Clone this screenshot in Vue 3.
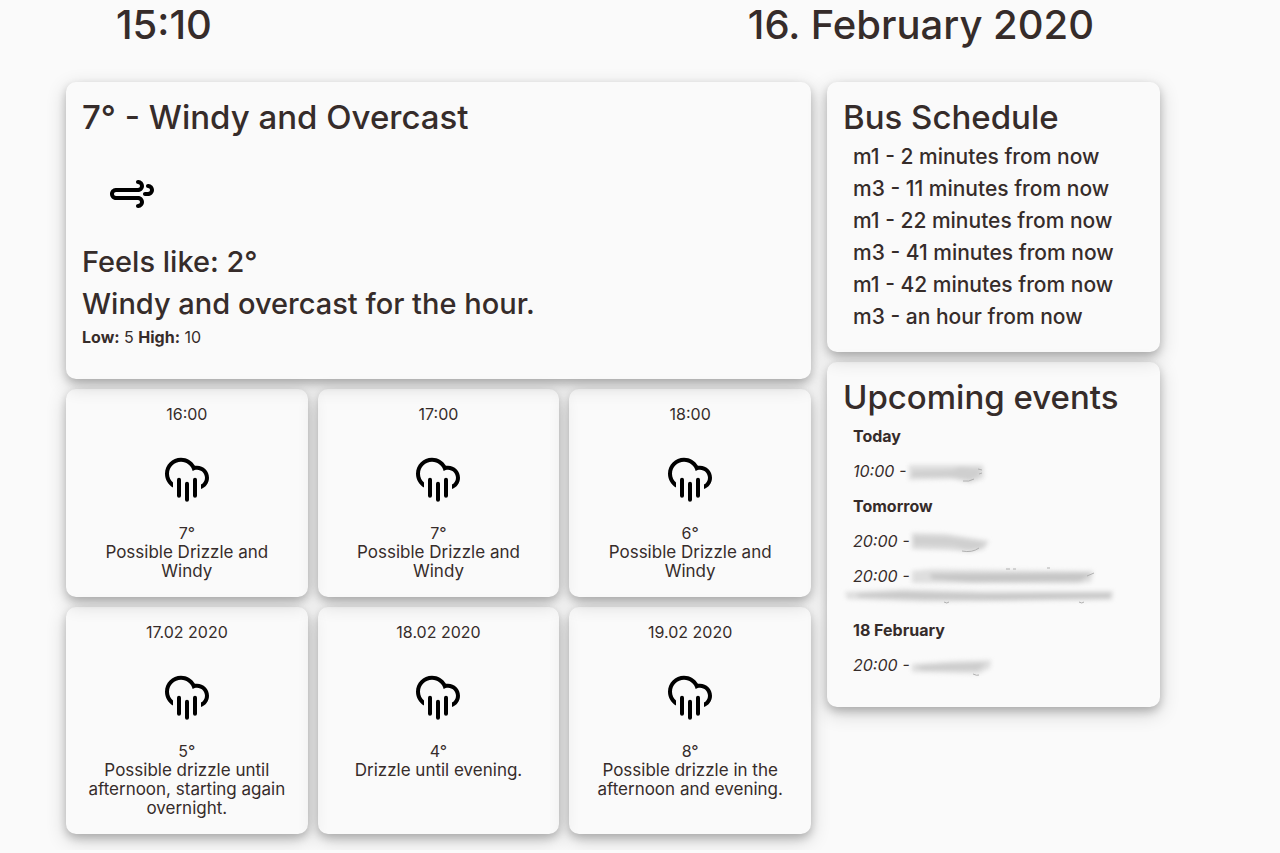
<script setup>
const hourly = [
  { when: '16:00', temp: '7°', text: 'Possible Drizzle and Windy' },
  { when: '17:00', temp: '7°', text: 'Possible Drizzle and Windy' },
  { when: '18:00', temp: '6°', text: 'Possible Drizzle and Windy' },
]
const daily = [
  { when: '17.02 2020', temp: '5°', text: 'Possible drizzle until afternoon, starting again overnight.' },
  { when: '18.02 2020', temp: '4°', text: 'Drizzle until evening.' },
  { when: '19.02 2020', temp: '8°', text: 'Possible drizzle in the afternoon and evening.' },
]
const forecasts = [...hourly, ...daily]
const buses = [
  'm1 - 2 minutes from now',
  'm3 - 11 minutes from now',
  'm1 - 22 minutes from now',
  'm3 - 41 minutes from now',
  'm1 - 42 minutes from now',
  'm3 - an hour from now',
]
</script>

<template>
  <div class="page">
    <header class="top">
      <h1>15:10</h1>
      <h1>16. February 2020</h1>
    </header>

    <main class="board">
      <div class="weather">
        <section class="card current">
          <h2>7° - Windy and Overcast</h2>
          <svg class="icon" viewBox="0 0 100 100" aria-hidden="true">
            <path d="M65.999,52h-3c-1.104,0-2-0.895-2-1.999c0-1.104,0.896-2,2-2h3c1.104,0,2-0.896,2-1.999c0-1.105-0.896-2-2-2s-2-0.896-2-2s0.896-2,2-2c0.138,0,0.271,0.014,0.401,0.041c3.121,0.211,5.597,2.783,5.597,5.959C71.997,49.314,69.312,52,65.999,52z" />
            <path d="M55.999,48.001H34.002c-1.104,0-1.999,0.896-1.999,2c0,1.104,0.895,1.999,1.999,1.999h21.997c3.313,0,6,2.688,6,6c0,3.176-2.476,5.748-5.597,5.959C56.271,63.986,56.139,64,55.999,64c-1.104,0-2-0.896-2-2c0-1.105,0.896-2,2-2s2-0.896,2-2s-0.896-2-2-2H34.002c-3.313,0-6-2.686-6-5.999c0-3.175,2.475-5.747,5.596-5.959c0.131-0.026,0.266-0.04,0.403-0.04h21.998c1.104,0,2-0.896,2-2s-0.896-2-2-2s-2-0.895-2-2c0-1.104,0.896-2,2-2c0.14,0,0.272,0.015,0.403,0.041c3.121,0.211,5.597,2.783,5.597,5.959C61.999,45.314,59.312,48.001,55.999,48.001z" />
          </svg>
          <h3>Feels like: 2°</h3>
          <h3>Windy and overcast for the hour.</h3>
          <p><strong>Low:</strong> 5 <strong>High:</strong> 10</p>
        </section>

        <section v-for="item in forecasts" :key="item.when" class="card forecast">
          <div>{{ item.when }}</div>
          <svg class="icon" viewBox="0 0 100 100" aria-hidden="true">
            <path d="M63.999,64.943v-4.381c2.389-1.385,4-3.963,4-6.92c0-4.418-3.58-8-7.998-8c-1.603,0-3.084,0.481-4.334,1.291c-1.232-5.316-5.973-9.29-11.664-9.29c-6.628,0-11.999,5.372-11.999,12c0,3.549,1.55,6.729,3.998,8.926v4.914c-4.776-2.769-7.998-7.922-7.998-13.84c0-8.836,7.162-15.999,15.999-15.999c6.004,0,11.229,3.312,13.965,8.203c0.664-0.113,1.336-0.205,2.033-0.205c6.627,0,11.998,5.373,11.998,12C71.999,58.863,68.655,63.293,63.999,64.943z" />
            <path class="rain" d="M42,55.64V71.64M50,59.64V75.64M58,55.64V71.64" />
          </svg>
          <div>{{ item.temp }}</div>
          <div class="summary">{{ item.text }}</div>
        </section>
      </div>

      <div class="side">
        <section class="card">
          <h2>Bus Schedule</h2>
          <ul class="buses">
            <li v-for="bus in buses" :key="bus">{{ bus }}</li>
          </ul>
        </section>

        <section class="card events">
          <h2>Upcoming events</h2>
          <h4>Today</h4>
          <p>
            <em>10:00 -</em>
            <svg class="smudge" width="80" height="19" viewBox="0 0 80 19" aria-hidden="true">
              <g class="soft">
                <path fill="#dedede" d="M1 3L52 3L75 3L76 16L62 21L45 17L1 18Z" />
                <path fill="#cfcfcf" d="M4 9L44 8L52 5L74 7L70 15L62 18L40 15L4 15Z" />
              </g>
              <path class="trace" d="M55 19Q61 20 66 17M70 7l4 1M71 12l3-1" />
            </svg>
          </p>
          <h4>Tomorrow</h4>
          <p>
            <em>20:00 -</em>
            <svg class="smudge" width="80" height="19" viewBox="0 0 80 19" aria-hidden="true">
              <g class="soft">
                <path fill="#d9d9d9" d="M0 1L35 2L77 9L72 17L58 20L38 18L0 17Z" />
                <path fill="#cfcfcf" d="M1 5L35 6L73 11L66 17L55 17L42 13L2 12Z" />
              </g>
              <path class="trace" d="M50 19Q60 21 67 16" />
            </svg>
          </p>
          <p>
            <em>20:00 -</em>
            <svg class="smudge" width="184" height="19" viewBox="0 0 184 19" aria-hidden="true">
              <g class="soft">
                <path fill="#dedede" d="M0 4L20 2L181 4L179 15L165 17L0 16Z" />
                <path fill="#c6c6c6" d="M18 7L181 6L168 14L60 15L20 12Z" />
              </g>
              <path class="trace" d="M94 2h4M101 2h3M135 1h3M175 9L182 6" />
            </svg>
            <svg class="smudge wide" width="272" height="19" viewBox="0 0 272 19" aria-hidden="true">
              <g class="soft">
                <path fill="#dedede" d="M2 6L60 3L140 5L270 5L269 14L80 16L4 13Z" />
                <path fill="#c8c8c8" d="M14 8L60 6L140 8L268 7L267 12L160 14L80 13L16 11Z" />
              </g>
              <path class="trace" d="M101 16q3 2 5 0M236 16q3 2 5 0" />
            </svg>
          </p>
          <h4>18 February</h4>
          <p>
            <em>20:00 -</em>
            <svg class="smudge" width="84" height="19" viewBox="0 0 84 19" aria-hidden="true">
              <g class="soft">
                <path fill="#dedede" d="M0 8L40 5L79 4L78 12L66 18L0 16Z" />
                <path fill="#cccccc" d="M4 10L40 8L74 7L66 14L10 14Z" />
              </g>
              <path class="trace" d="M61 18q4 2 6 1" />
            </svg>
          </p>
        </section>
      </div>
    </main>
  </div>
</template>

<style>
body {
  margin: 0;
  background: #fafafa;
}
</style>

<style scoped>
.page {
  padding: 0 120px 16px 66px;
  color: #362c2a;
  font-family: Inter, "Liberation Sans", sans-serif;
  font-size: 16px;
  line-height: 19px;
}
h1, h2, h3, h4, p, ul {
  margin: 0;
  padding: 0;
}
h1, h2, h3 {
  font-weight: 500;
}
h1 {
  font-size: 40px;
  line-height: 50px;
}
h2 {
  margin-bottom: 8px;
  font-size: 33px;
  line-height: 38px;
}
h3 {
  margin-bottom: 6px;
  font-size: 29px;
  line-height: 36px;
}
h4 {
  font-size: 16px;
  font-weight: 700;
}
.top {
  display: flex;
  justify-content: space-between;
  padding: 0 66px 32px 50px;
}
.board {
  display: grid;
  grid-template-columns: 745fr 333fr;
  align-items: start;
  gap: 16px;
}
.weather {
  display: grid;
  grid-template-columns: repeat(3, 1fr);
  gap: 10px;
}
.side {
  display: grid;
  gap: 10px;
}
.card {
  padding: 16px;
  border-radius: 10px;
  box-shadow: 0 4px 8px rgba(0, 0, 0, 0.2), 0 6px 20px rgba(0, 0, 0, 0.19);
}
.current {
  grid-column: 1 / -1;
}
.current p {
  margin-bottom: 16px;
}
.forecast {
  text-align: center;
}
.summary {
  font-size: 17px;
}
.icon {
  display: block;
  width: 100px;
  height: 100px;
  fill: #000;
}
.forecast .icon {
  margin: 0 auto;
}
.rain {
  stroke: #000;
  stroke-width: 4;
  stroke-linecap: round;
}
.buses {
  list-style: none;
}
.buses li {
  margin-bottom: 6px;
  padding-left: 10px;
  font-size: 21px;
  font-weight: 500;
  line-height: 26px;
}
.events h2 {
  margin-bottom: 11px;
}
.events h4,
.events p {
  margin-bottom: 16px;
  padding-left: 10px;
}
.events em {
  margin-right: 2px;
}
.smudge {
  height: 19px;
  vertical-align: top;
  overflow: visible;
}
.smudge.wide {
  display: block;
  margin-left: -10px;
}
.soft {
  filter: blur(2px);
}
.trace {
  fill: none;
  stroke: #b0b0b0;
  stroke-width: 1;
}
</style>
